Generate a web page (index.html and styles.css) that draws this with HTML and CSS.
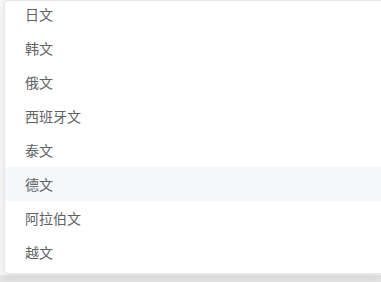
FILE: index.html
```html
<!DOCTYPE html>
<html lang="zh">
<head>
<meta charset="utf-8">
<link rel="stylesheet" href="styles.css">
</head>
<body>
<div class="page">
  <div class="panel">
    <ul class="list">
      <li class="item">日文</li>
      <li class="item">韩文</li>
      <li class="item">俄文</li>
      <li class="item">西班牙文</li>
      <li class="item">泰文</li>
      <li class="item hover">德文</li>
      <li class="item">阿拉伯文</li>
      <li class="item">越文</li>
    </ul>
  </div>
</div>
</body>
</html>
```
FILE: styles.css
```css
html, body {
  margin: 0;
  padding: 0;
  background: #ffffff;
}
.page {
  width: 381px;
  height: 282px;
  overflow: hidden;
  padding-left: 4px;
  box-sizing: border-box;
  background: linear-gradient(to bottom, #fafafa 0, #fafafa 274px, #e4e4e4 276px, #e4e4e4 100%);
}
.panel {
  height: 274px;
  box-sizing: border-box;
  border: 1px solid #e4e7ed;
  border-right: none;
  border-radius: 4px 0 0 4px;
  background: #fff;
  box-shadow: 0 2px 12px rgba(0, 0, 0, 0.1);
  overflow: hidden;
}
.list {
  list-style: none;
  margin: -4px 0 0 0;
  padding: 0;
}
.item {
  height: 34px;
  line-height: 34px;
  padding: 0 20px;
  font-family: "Microsoft YaHei", "Noto Sans CJK SC", "Liberation Sans", sans-serif;
  font-size: 14px;
  color: #606266;
}
.item.hover {
  background: #f5f7fa;
}
```
